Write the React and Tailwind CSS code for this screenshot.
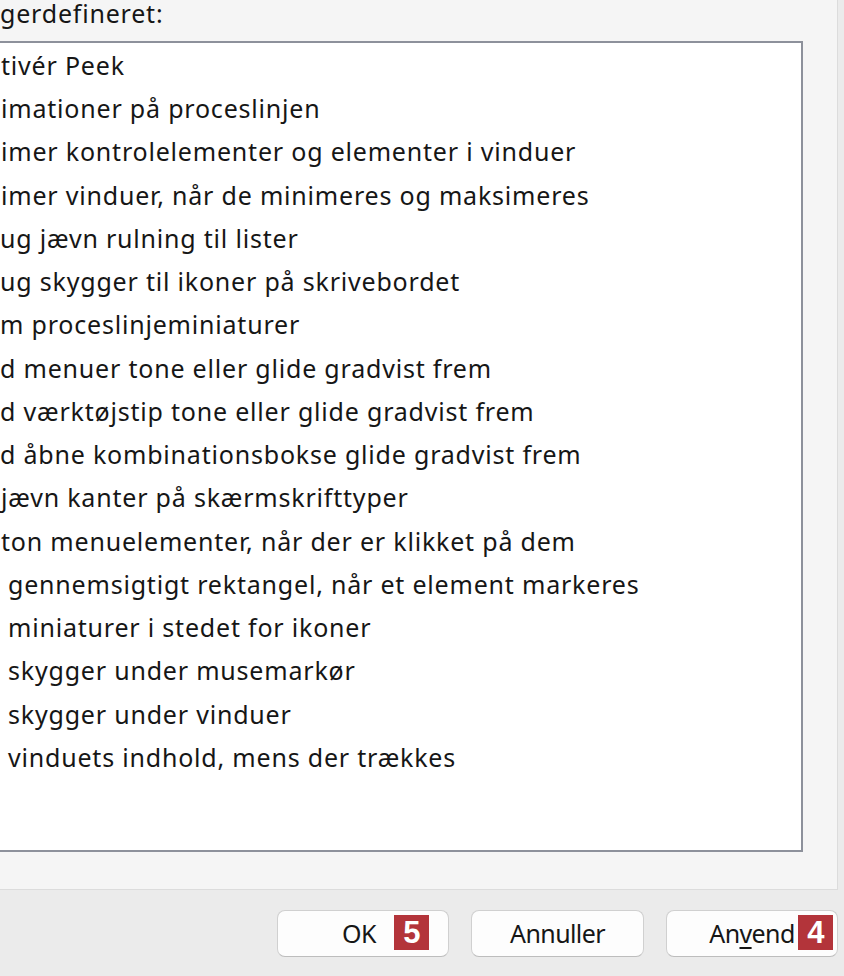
import React from "react";

const items = [
  ["tivér Peek", "pl-[1px]"],
  ["imationer på proceslinjen", "pl-[1px]"],
  ["imer kontrolelementer og elementer i vinduer", "pl-[1px]"],
  ["imer vinduer, når de minimeres og maksimeres", "pl-[1px]"],
  ["ug jævn rulning til lister", "pl-[0px]"],
  ["ug skygger til ikoner på skrivebordet", "pl-[0px]"],
  ["m proceslinjeminiaturer", "pl-[0px]"],
  ["d menuer tone eller glide gradvist frem", "pl-[0px]"],
  ["d værktøjstip tone eller glide gradvist frem", "pl-[0px]"],
  ["d åbne kombinationsbokse glide gradvist frem", "pl-[0px]"],
  ["jævn kanter på skærmskrifttyper", "pl-[1px]"],
  ["ton menuelementer, når der er klikket på dem", "pl-[1px]"],
  ["gennemsigtigt rektangel, når et element markeres", "pl-[8px]"],
  ["miniaturer i stedet for ikoner", "pl-[8px]"],
  ["skygger under musemarkør", "pl-[8px]"],
  ["skygger under vinduer", "pl-[8px]"],
  ["vinduets indhold, mens der trækkes", "pl-[8px]"],
];

function Badge({ n }) {
  return (
    <span className="flex h-[35px] w-[35px] items-center justify-center bg-[#b3343a] text-[31px] font-bold leading-none text-white [font-family:'Liberation_Sans',Arial,sans-serif]">
      {n}
    </span>
  );
}

function Button({ children, badge, badgeLeft, width = "w-[172px]" }) {
  return (
    <div className={`relative flex h-[47px] ${width} items-center justify-center rounded-[8px] border border-[#d0d0d0] border-b-[#bdbdbd] bg-[#fdfdfd] text-[25px] tracking-[-0.6px] text-[#161616]`}>
      <span className="leading-none">{children}</span>
      {badge && (
        <div className={badgeLeft}>
          <Badge n={badge} />
        </div>
      )}
    </div>
  );
}

export default function App() {
  return (
    <div className="flex h-[976px] w-[844px] flex-col overflow-hidden bg-[#ebebeb] [font-family:'Noto_Sans','Open_Sans',sans-serif]">
      <div className="flex h-[890px] w-[838px] shrink-0 flex-col overflow-hidden border-b border-r border-[#dcdcdc] bg-[#f5f5f5]">
        <div className="h-[41px] text-[25px] leading-[26px] tracking-[0.8px] text-[#161616]">
          gerdefineret:
        </div>
        <div className="-ml-[2px] h-[811px] w-[805px] border-2 border-[#8d919b] bg-white pt-[1px]">
          <ul className="text-[25px] tracking-[0.8px] text-[#161616]">
            {items.map(([t, pad]) => (
              <li key={t} className={`flex h-[43.25px] items-center whitespace-nowrap ${pad}`}>
                {t}
              </li>
            ))}
          </ul>
        </div>
      </div>
      <div className="flex justify-end gap-[22px] pr-[6px] pt-[20px]">
        <Button badge="5" badgeLeft="absolute left-[116px] top-[4px]">
          <span className="-ml-[8px]">OK</span>
        </Button>
        <Button width="w-[173px]">Annuller</Button>
        <Button badge="4" badgeLeft="absolute left-[131px] top-[4px]">
          An<span className="underline underline-offset-4">v</span>end
        </Button>
      </div>
    </div>
  );
}
